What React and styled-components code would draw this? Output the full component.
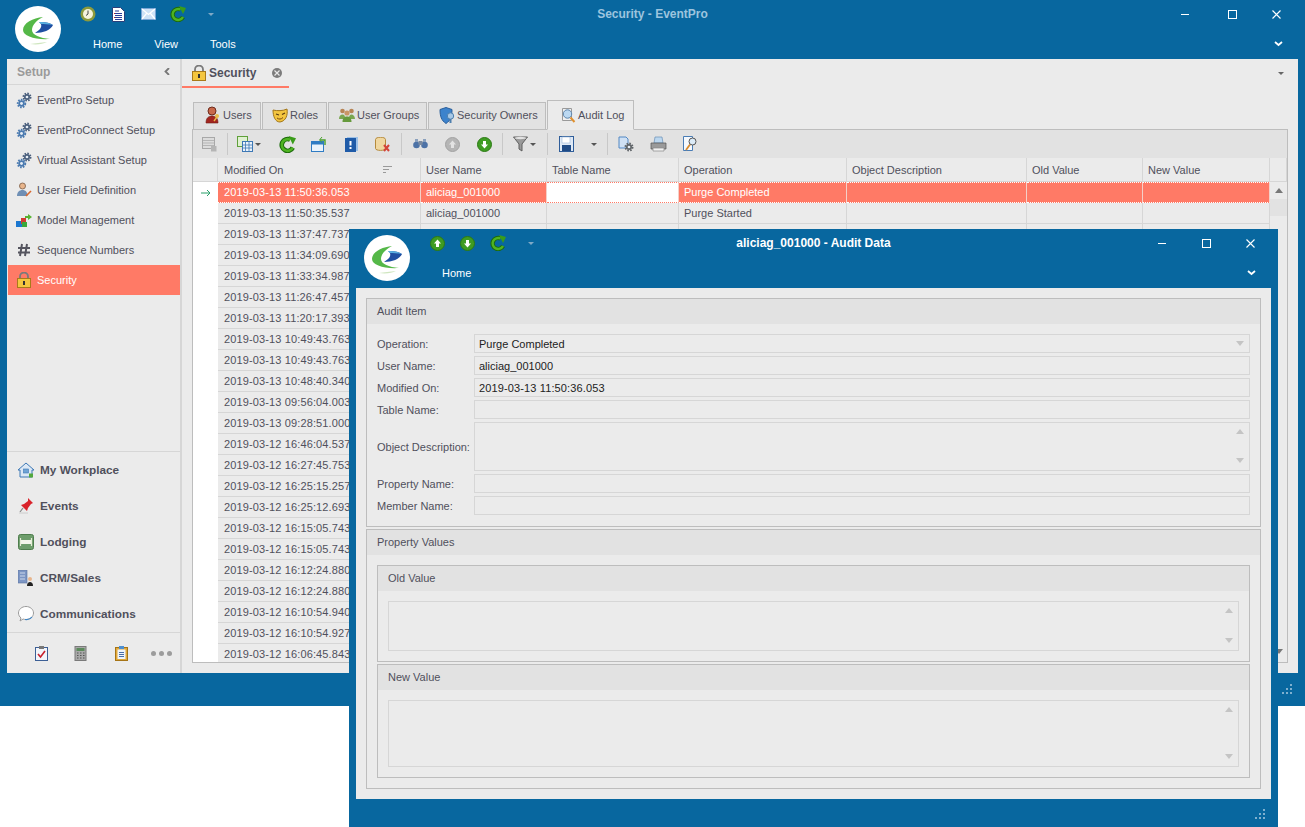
import React from "react";
import styled, { createGlobalStyle } from "styled-components";

const BLUE = "#08679f";
const PANEL = "#ebebeb";
const BAND = "#e2e2e2";
const LINE = "#bdbdbd";
const SOFT = "#d6d6d6";
const SALMON = "#ff7a66";
const TEXT = "#50505c";

const GlobalStyle = createGlobalStyle`
  html, body {
    margin: 0;
    background: #fff;
  }
  body {
    font-family: "Liberation Sans", Arial, sans-serif;
    font-size: 11px;
    color: ${TEXT};
  }
`;

const Desktop = styled.div`
  position: relative;
  width: 1305px;
  height: 827px;
  overflow: hidden;
`;

/* ---------- window chrome ---------- */

const MainWindow = styled.div`
  position: relative;
  height: 706px;
  background: ${BLUE};
  display: flex;
  flex-direction: column;
`;

const DialogWindow = styled.div`
  position: absolute;
  left: 349px;
  top: 229px;
  width: 929px;
  height: 598px;
  background: ${BLUE};
  display: flex;
  flex-direction: column;
`;

const LogoSpot = styled.div`
  position: absolute;
  left: 15px;
  top: 6px;
  width: 46px;
  height: 46px;
  border-radius: 50%;
  background: #fff;
`;

const TitleRow = styled.div`
  height: 30px;
  display: grid;
  grid-template-columns: 1fr auto 1fr;
  align-items: center;
  padding-bottom: 2px;
  box-sizing: border-box;
`;

const QuickBar = styled.div`
  display: flex;
  align-items: center;
  padding-left: ${(p) => p.$left}px;
  gap: ${(p) => p.$gap}px;
`;

const WindowTitle = styled.div`
  font-weight: bold;
  font-size: 12px;
  color: ${(p) => (p.$bright ? "#ffffff" : "#9cc4de")};
`;

const CaptionButtons = styled.div`
  display: flex;
  justify-content: flex-end;
  align-items: center;
  gap: 35px;
  padding-right: ${(p) => p.$right}px;
`;

const MinSlot = styled.div`
  display: flex;
  margin-right: ${(p) => p.$extra || 0}px;
`;

const MenuRow = styled.div`
  height: 29px;
  display: flex;
  align-items: center;
  justify-content: space-between;
  padding: 0 22px 1px ${(p) => p.$left}px;
  box-sizing: border-box;
`;

const MenuList = styled.div`
  display: flex;
  gap: 32px;
`;

const MenuItem = styled.span`
  color: #fff;
  font-size: 11px;
`;

const WorkArea = styled.div`
  margin: 0 7px;
  height: 614px;
  background: ${PANEL};
  display: flex;
`;

const StatusBar = styled.div`
  flex: 1;
  display: flex;
  align-items: center;
  justify-content: flex-end;
  padding-right: 12px;
  padding-top: ${(p) => p.$top || 0}px;
`;

/* ---------- sidebar ---------- */

const Sidebar = styled.aside`
  width: 175px;
  box-sizing: border-box;
  border-right: 2px solid ${SOFT};
  display: flex;
  flex-direction: column;
  flex-shrink: 0;
`;

const SidebarHead = styled.div`
  height: 26px;
  box-sizing: border-box;
  display: flex;
  align-items: center;
  justify-content: space-between;
  padding: 0 8px 0 10px;
  border-bottom: 1px solid ${SOFT};
  font-weight: bold;
  font-size: 12px;
  color: #9a9a9a;
`;

const NavList = styled.nav`
  flex: 1;
  padding-left: 1px;
`;

const IconSlot = styled.span`
  width: 16px;
  display: flex;
  align-items: center;
  justify-content: center;
  flex-shrink: 0;
`;

const NavItem = styled.div`
  height: 30px;
  display: flex;
  align-items: center;
  gap: 5px;
  padding-left: 8px;
  background: ${(p) => (p.$active ? SALMON : "transparent")};
  color: ${(p) => (p.$active ? "#fff" : TEXT)};
`;

const Modules = styled.div`
  box-sizing: border-box;
  height: 182px;
  border-top: 1px solid ${SOFT};
  border-bottom: 1px solid ${SOFT};
`;

const ModuleItem = styled.div`
  height: 36px;
  display: flex;
  align-items: center;
  gap: 6px;
  padding-left: 11px;
  font-weight: bold;
  font-size: 11.8px;
`;

const SideFooter = styled.div`
  height: 40px;
  display: grid;
  grid-template-columns: repeat(4, 40px);
  align-items: center;
  justify-items: center;
  padding-left: 14px;
`;

const MoreDots = styled.div`
  display: flex;
  gap: 3px;
`;

const Dot = styled.i`
  width: 5px;
  height: 5px;
  border-radius: 50%;
  background: #9c9c9c;
`;

/* ---------- document area ---------- */

const DocArea = styled.main`
  flex: 1;
  min-width: 0;
  display: flex;
  flex-direction: column;
`;

const DocTabs = styled.div`
  height: 30px;
  display: flex;
  align-items: flex-start;
  justify-content: space-between;
  padding-right: 14px;
`;

const DocTab = styled.div`
  width: 107px;
  height: 29px;
  box-sizing: border-box;
  border-bottom: 2px solid ${SALMON};
  display: flex;
  align-items: center;
  padding-left: 10px;
  gap: 3px;
  font-weight: bold;
  font-size: 12px;
`;

const CloseDot = styled.span`
  width: 10px;
  height: 10px;
  margin-left: 13px;
  border-radius: 50%;
  background: #7b7b7b;
  display: flex;
  align-items: center;
  justify-content: center;
`;

const SmallCaret = styled.span`
  width: 0;
  height: 0;
  display: block;
  border-left: 3px solid transparent;
  border-right: 3px solid transparent;
  border-top: 3px solid ${(p) => p.$color || "#555"};
  margin-left: ${(p) => p.$left || 0}px;
`;

const CaretHolder = styled.div`
  height: 28px;
  display: flex;
  align-items: center;
`;

const DocBody = styled.div`
  flex: 1;
  min-height: 0;
  display: flex;
  flex-direction: column;
  padding: 11px 10px 10px 10px;
`;

const AuditTabs = styled.div`
  display: flex;
  height: 30px;
  align-items: flex-end;
  gap: 1px;
  padding-left: 1px;
  margin-bottom: -1px;
  position: relative;
  z-index: 1;
`;

const AuditTab = styled.div`
  width: ${(p) => p.$w}px;
  height: ${(p) => (p.$active ? 30 : 28)}px;
  box-sizing: border-box;
  border: 1px solid ${LINE};
  border-bottom: 1px solid ${(p) => (p.$active ? PANEL : LINE)};
  background: ${(p) => (p.$active ? PANEL : BAND)};
  display: flex;
  align-items: center;
  gap: 2px;
  padding-left: ${(p) => p.$pad}px;
  padding-bottom: ${(p) => (p.$active ? 0 : 2)}px;
  white-space: nowrap;
`;

const AuditFrame = styled.div`
  flex: 1;
  min-height: 0;
  border: 1px solid ${LINE};
  display: flex;
  flex-direction: column;
`;

const Toolbar = styled.div`
  height: 28px;
  flex-shrink: 0;
  background: ${BAND};
  display: flex;
  align-items: center;
  padding-left: 4px;
`;

const ToolButton = styled.div`
  width: ${(p) => p.$w || 32}px;
  margin-left: ${(p) => p.$l || 0}px;
  display: flex;
  align-items: center;
  justify-content: center;
  gap: 2px;
`;

const ToolSep = styled.div`
  width: 1px;
  height: 22px;
  background: #c8c8c8;
  margin: 0 2px 0 ${(p) => p.$l ?? 2}px;
`;

const COLUMNS = "25px 203px 126px 132px 168px 180px 116px 127px";

const HeaderRow = styled.div`
  height: 24px;
  flex-shrink: 0;
  display: grid;
  grid-template-columns: ${COLUMNS} 17px;
  border-bottom: 1px solid ${SOFT};
  box-sizing: border-box;
`;

const HeaderCell = styled.div`
  min-width: 0;
  box-sizing: border-box;
  border-right: 1px solid ${SOFT};
  display: flex;
  align-items: center;
  justify-content: space-between;
  padding: 0 ${(p) => (p.$sorted ? 28 : 0)}px 0 5px;
  white-space: nowrap;
  &:nth-child(2) {
    padding-left: 6px;
  }
`;

const GridBody = styled.div`
  flex: 1;
  min-height: 0;
  display: flex;
  overflow: hidden;
  background: #fff;
`;

const Rows = styled.div`
  width: 1077px;
  overflow: hidden;
`;

const Row = styled.div`
  height: 21px;
  display: grid;
  grid-template-columns: ${COLUMNS};
`;

const RowMark = styled.div`
  background: #fff;
  display: flex;
  align-items: center;
  justify-content: center;
`;

const Cell = styled.div`
  box-sizing: border-box;
  border-right: 1px solid ${(p) => (p.$selected ? "#f4d0c8" : SOFT)};
  border-bottom: 1px solid ${SOFT};
  padding-left: 5px;
  line-height: 20px;
  white-space: nowrap;
  background: ${(p) => (p.$selected ? SALMON : PANEL)};
  color: ${(p) => (p.$selected ? "#fff" : TEXT)};
  ${(p) => p.$selected && "border-top: 1px dotted #fff; border-bottom: 1px dotted #fff; line-height: 18px;"}
  ${(p) => p.$focus && `background: #fff; border-top: 1px dotted ${SALMON}; border-bottom: 1px dotted ${SALMON};`}
  &:nth-child(2) {
    padding-left: 6px;
  }
`;

const TimeText = styled.span`
  letter-spacing: 0.13px;
`;

const ScrollTrack = styled.div`
  flex: 1;
  background: ${PANEL};
  display: flex;
  flex-direction: column;
  align-items: center;
  padding-bottom: 2px;
`;

const ScrollEnd = styled.div`
  height: 17px;
  display: flex;
  align-items: center;
  justify-content: center;
  flex-shrink: 0;
`;

const ScrollThumb = styled.div`
  width: 100%;
  height: 17px;
  background: ${BAND};
`;

const ScrollGap = styled.div`
  flex: 1;
`;

const Triangle = styled.span`
  width: 0;
  height: 0;
  border-left: 4px solid transparent;
  border-right: 4px solid transparent;
  ${(p) => (p.$down ? "border-top" : "border-bottom")}: 5px solid ${(p) => p.$color || "#777"};
`;

/* ---------- dialog ---------- */

const DialogBody = styled.div`
  margin: 0 7px;
  height: 511px;
  background: ${PANEL};
  box-sizing: border-box;
  padding: 10px;
  display: flex;
  flex-direction: column;
  gap: 2px;
  flex-shrink: 0;
`;

const GroupBox = styled.section`
  border: 1px solid ${LINE};
  display: flex;
  flex-direction: column;
  box-sizing: border-box;
  height: ${(p) => p.$h}px;
`;

const GroupHead = styled.div`
  height: 25px;
  box-sizing: border-box;
  flex-shrink: 0;
  background: ${BAND};
  display: flex;
  align-items: center;
  padding: 0 0 2px 10px;
`;

const AuditFields = styled.div`
  padding: 10px 10px 0 10px;
  display: flex;
  flex-direction: column;
  gap: 3px;
`;

const FieldRow = styled.div`
  display: grid;
  grid-template-columns: 97px 1fr;
  align-items: center;
`;

const FieldLabel = styled.label`
  white-space: nowrap;
`;

const FieldBox = styled.div`
  height: ${(p) => p.$h || 19}px;
  box-sizing: border-box;
  border: 1px solid ${SOFT};
  display: flex;
  align-items: center;
  justify-content: space-between;
  padding: 0 5px 0 4px;
  color: #222;
`;

const MemoButtons = styled.div`
  align-self: stretch;
  display: flex;
  flex-direction: column;
  justify-content: space-between;
  margin-left: auto;
  padding: 6px 0 7px;
`;

const GroupInner = styled.div`
  flex: 1;
  padding: 10px;
  display: flex;
  flex-direction: column;
  gap: 2px;
`;

const MemoPad = styled.div`
  flex: 1;
  padding: 10px;
  display: flex;
`;

const MemoBox = styled(FieldBox)`
  flex: 1;
  height: auto;
`;

/* ---------- drawings ---------- */

const Logo = () => (
  <svg width="46" height="46" viewBox="0 0 46 46">
    <path d="M28 11C18 12 8 17 8 24c0 6 12 10 27 9-10-1-18-4-18-9 0-5 5-10 11-13z" fill="#55b848" />
    <path d="M15 38c7 1 13 0 17-2-6 1-12 1-17 2z" fill="#cfe6bf" />
    <path d="M20 27c8 0 16-3 18-8-3-2.5-9-3.5-14-3 3 2 3 5 0 8z" fill="#1f4fa2" />
    <path d="M24 16c5-.5 10 .5 14 3-4-1-9-1-12-1z" fill="#5ab0e0" />
  </svg>
);

const Clock = () => (
  <svg width="16" height="16" viewBox="0 0 16 16">
    <circle cx="8" cy="8" r="7.5" fill="#8c9a3c" />
    <circle cx="8" cy="8" r="5" fill="#f5f3dc" />
    <path d="M8 4.5V8L6 9.5" stroke="#444" strokeWidth="1" fill="none" />
  </svg>
);

const Doc = () => (
  <svg width="13" height="15" viewBox="0 0 13 15">
    <path d="M.5.5h8l4 4v10H.5z" fill="#fff" stroke="#2a3f7a" />
    <path d="M3 4h4M3 6.5h7M3 8.5h7M3 10.5h7M3 12.5h7" stroke="#2a3f9a" strokeWidth="1" />
    <path d="M2 6.5h1M2 10.5h1" stroke="#c22" strokeWidth="1" />
  </svg>
);

const Mail = () => (
  <svg width="15" height="12" viewBox="0 0 15 12">
    <rect x=".5" y=".5" width="14" height="11" fill="#cfe3f7" stroke="#7aa5d4" />
    <path d="M1 1l6.5 5.5L14 1M1 11l4.5-5.5M14 11L9.5 5.5" stroke="#fff" strokeWidth="1.2" fill="none" />
  </svg>
);

const Refresh = ({ size = 16 }) => (
  <svg width={size} height={size} viewBox="0 0 16 16">
    <path d="M13 11A5.5 5.5 0 1 1 10.5 3.5" fill="none" stroke="#1c6a0c" strokeWidth="4.4" />
    <path d="M13 11A5.5 5.5 0 1 1 10.5 3.5" fill="none" stroke="#4fb422" strokeWidth="2.4" />
    <path d="M9 0l7 2-3 6z" fill="#3a9c1a" />
  </svg>
);

const Gear = ({ x, y, r, color }) => (
  <>
    <circle cx={x} cy={y} r={r + 0.6} fill="none" stroke={color} strokeWidth="1.8" strokeDasharray="1.6 1.2" />
    <circle cx={x} cy={y} r={r} fill={color} />
    <circle cx={x} cy={y} r={r * 0.45} fill="#e8eef5" />
  </>
);

const Gears = () => (
  <svg width="16" height="17" viewBox="0 0 16 17">
    <Gear x={11} y={5} r={3} color="#4a5f7d" />
    <Gear x={5.5} y={11.5} r={3.2} color="#4a7ab0" />
  </svg>
);

const UserEdit = () => (
  <svg width="16" height="16" viewBox="0 0 16 16">
    <circle cx="6.5" cy="4" r="3" fill="#e8b58c" stroke="#7a5a44" strokeWidth=".8" />
    <path d="M1 14c0-4 2.500-6 5.500-6s5 2 5 6z" fill="#6f8fb5" />
    <path d="M10 14l5-5" stroke="#d9682f" strokeWidth="1.6" />
  </svg>
);

const ModelIcon = () => (
  <svg width="16" height="13" viewBox="0 0 16 13">
    <rect x="0" y="7" width="6" height="6" fill="#1b77d0" />
    <rect x="5" y="4" width="5" height="6" fill="#d23c33" />
    <rect x="6" y="8" width="5" height="5" fill="#3aa83a" />
    <path d="M9 2h3V0l4 3-4 3V4H9z" fill="#58b332" />
  </svg>
);

const HashIcon = () => (
  <svg width="14" height="14" viewBox="0 0 14 14">
    <path d="M5 1L3 13M10 1L8 13M1 5h12M1 9.5h12" stroke="#55555f" strokeWidth="2" fill="none" />
  </svg>
);

const Lock = () => (
  <svg width="14" height="16" viewBox="0 0 14 16">
    <path d="M3 7V4.5a4 4 0 0 1 8 0V7" fill="none" stroke="#7a7a7a" strokeWidth="1.8" />
    <rect x=".5" y="6.5" width="13" height="9" fill="#f4c63f" stroke="#a97a1a" />
    <rect x="6" y="9" width="2" height="4" fill="#333" />
  </svg>
);

const HomeIcon = () => (
  <svg width="16" height="16" viewBox="0 0 16 16">
    <path d="M8 1L0 8h2v7h12V8h2z" fill="#dce8f5" stroke="#3d78b5" />
    <rect x="5.5" y="7" width="5" height="4" fill="#6fa3d5" stroke="#3d78b5" strokeWidth=".6" />
    <rect x="11" y="11.5" width="4" height="4" fill="#53a83c" />
  </svg>
);

const PinIcon = () => (
  <svg width="16" height="16" viewBox="0 0 16 16">
    <path d="M10 0l5 5-2 1-3 4-1 3-6-6 3-1 4-3z" fill="#d9232b" />
    <path d="M5 10L2 14" stroke="#888" strokeWidth="1.2" />
    <path d="M1 15h9" stroke="#ccc" strokeWidth="1" />
  </svg>
);

const BedIcon = () => (
  <svg width="16" height="16" viewBox="0 0 16 16">
    <rect x=".5" y=".5" width="15" height="15" rx="2" fill="#6d9d6b" stroke="#4e7d4d" />
    <rect x="3" y="6" width="10" height="4" fill="#f2f5ea" />
    <path d="M2.5 4v8M13.5 4v8" stroke="#e6ecd8" strokeWidth="1.2" />
  </svg>
);

const CrmIcon = () => (
  <svg width="16" height="16" viewBox="0 0 16 16">
    <rect x="0" y="0" width="9" height="13" fill="#7d96c4" stroke="#596f9c" strokeWidth=".6" />
    <path d="M2 3h5M2 6h5M2 9h5" stroke="#cdd8ea" strokeWidth="1" />
    <circle cx="12" cy="9" r="2" fill="#e8b58c" />
    <path d="M9 16c0-3 1.5-4 3-4s3 1 3 4z" fill="#222" />
  </svg>
);

const Bubble = () => (
  <svg width="16" height="16" viewBox="0 0 16 16">
    <path d="M8 .5c4.2 0 7.5 2.9 7.5 6.5s-3.3 6.5-7.5 6.5c-1 0-2-.2-2.9-.5L2 15l1-3C1.5 10.8.5 9 .5 7 .5 3.400 3.800.5 8 .5z" fill="#fff" stroke="#9a9a9a" />
    <path d="M14 11c-1.5 2-4 3-7 2.5" stroke="#3d85c6" strokeWidth="1.2" fill="none" />
  </svg>
);

const ClipCheck = () => (
  <svg width="13" height="15" viewBox="0 0 13 15">
    <rect x=".5" y="1.5" width="12" height="13" fill="#f3f5fa" stroke="#3c5f95" />
    <rect x="4" y="0" width="5" height="3" fill="#777" />
    <path d="M3 8l2.5 3L10 5" stroke="#c8202c" strokeWidth="1.6" fill="none" />
  </svg>
);

const Calc = () => (
  <svg width="14" height="15" viewBox="0 0 14 15">
    <rect x="1" y=".5" width="11" height="14" fill="#a9a9a9" stroke="#7a7a7a" />
    <rect x="2.5" y="2" width="8" height="3" fill="#5c8a5c" />
    <path d="M3 7h1.5M6 7h1.5M9 7h1.5M3 9.5h1.5M6 9.5h1.5M9 9.5h1.5M3 12h1.5M6 12h1.5M9 12h1.5" stroke="#555" strokeWidth="1.2" />
  </svg>
);

const ClipNote = () => (
  <svg width="13" height="15" viewBox="0 0 13 15">
    <rect x=".5" y="1.5" width="12" height="13" fill="#e2a93a" stroke="#a67416" />
    <rect x="2.5" y="3.5" width="8" height="9.5" fill="#eef4fb" />
    <rect x="4" y="0" width="5" height="3" fill="#4d8fd1" />
    <path d="M4 6.5h5M4 8.5h5M4 10.5h5" stroke="#4a6ea9" strokeWidth="1" />
  </svg>
);

const Chevron = ({ color = "#fff", down }) => (
  <svg width="9" height="7" viewBox="0 0 9 7">
    <path d={down ? "M1 1l3.5 3L8 1" : "M6 0L2.5 3.5 6 7"} stroke={color} strokeWidth="1.8" fill="none" />
  </svg>
);

const MinIcon = () => (
  <svg width="9" height="9" viewBox="0 0 9 9">
    <path d="M0 4.5h8" stroke="#fff" strokeWidth="1" />
  </svg>
);

const MaxIcon = () => (
  <svg width="9" height="9" viewBox="0 0 9 9">
    <rect x=".5" y=".5" width="8" height="8" fill="none" stroke="#fff" />
  </svg>
);

const CloseIcon = () => (
  <svg width="9" height="9" viewBox="0 0 9 9">
    <path d="M.5.5l8 8M8.5.5l-8 8" stroke="#fff" strokeWidth="1.1" />
  </svg>
);

const Grip = () => (
  <svg width="11" height="11" viewBox="0 0 11 11" fill="#7fb0cf">
    <rect x="8" y="0" width="2" height="2" />
    <rect x="4" y="4" width="2" height="2" />
    <rect x="8" y="4" width="2" height="2" />
    <rect x="0" y="8" width="2" height="2" />
    <rect x="4" y="8" width="2" height="2" />
    <rect x="8" y="8" width="2" height="2" />
  </svg>
);

const GreenArrow = ({ up, grey }) => (
  <svg width="15" height="15" viewBox="0 0 15 15">
    <circle cx="7.5" cy="7.5" r="7" fill={grey ? "#b5b5b5" : "#3f9c23"} stroke={grey ? "#a2a2a2" : "#2c7a14"} />
    <path
      d={up ? "M7.5 3.5L11 7.5H9V11H6V7.5H4z" : "M7.5 11.5L11 7.5H9V4H6V7.5H4z"}
      fill={grey ? "#e2e2e2" : "#fff"}
    />
  </svg>
);

const SortMark = () => (
  <svg width="9" height="8" viewBox="0 0 9 8">
    <path d="M0 .5h9M0 3.5h6M0 6.5h3" stroke="#9a9a9a" strokeWidth="1" />
  </svg>
);

const RowArrow = () => (
  <svg width="10" height="8" viewBox="0 0 10 8">
    <path d="M0 4h9M6 1l3 3-3 3" stroke="#2aa06a" strokeWidth="1" fill="none" />
  </svg>
);

const UsersIcon = () => (
  <svg width="16" height="18" viewBox="0 0 16 18">
    <circle cx="7" cy="5" r="4" fill="#c8694a" stroke="#6e2b1d" />
    <path d="M1 17c0-5 2.5-7 6-7s6 2 6 7z" fill="#a3251f" stroke="#6e1b14" strokeWidth=".6" />
    <circle cx="12" cy="10" r="2" fill="#e9bb49" />
    <path d="M12 11l-3 4" stroke="#e9bb49" strokeWidth="1.4" />
  </svg>
);

const MaskIcon = () => (
  <svg width="16" height="15" viewBox="0 0 16 15">
    <path d="M1 2c4 1 10 1 14-1 1 6-1 12-7 13C3 14 1 8 1 2z" fill="#f3c540" stroke="#a2761a" />
    <path d="M4 6l3 1M10 6.5l3-1.5" stroke="#5a3a10" strokeWidth="1.2" />
    <path d="M5 10c2 1.5 4 1.5 6-.5" stroke="#7a4a10" fill="none" />
  </svg>
);

const GroupIcon = () => (
  <svg width="16" height="14" viewBox="0 0 16 14">
    <circle cx="3.5" cy="3" r="2.3" fill="#b78455" />
    <circle cx="12.5" cy="3" r="2.3" fill="#b78455" />
    <circle cx="8" cy="5" r="2.6" fill="#c99566" />
    <path d="M0 11c0-3 1.5-4.5 3.500-4.500S6 8 6 10v1zM10 10c0-2 1-3.500 2.500-3.500S16 8 16 11h-6z" fill="#7aa650" />
    <path d="M3.5 14c0-4 2-5.500 4.500-5.500s4.500 1.500 4.500 5.500z" fill="#669a3c" />
  </svg>
);

const ShieldIcon = () => (
  <svg width="16" height="17" viewBox="0 0 16 17">
    <path d="M7 .5l6 2c0 7-1.500 11-6 14-4.500-3-6-7-6-14z" fill="#3d83cc" stroke="#2a5e9a" />
    <circle cx="11.5" cy="9" r="3.2" fill="#a7c8e6" stroke="#4e7fae" />
    <path d="M10.5 12h2v4h-2z" fill="#4e7fae" />
  </svg>
);

const AuditLogIcon = () => (
  <svg width="15" height="16" viewBox="0 0 15 16">
    <path d="M1.5 1.5h9v12h-9z" fill="#f0f0f0" stroke="#9a9a9a" />
    <circle cx="6.5" cy="7" r="4.2" fill="#bcd9f2" stroke="#5f86ad" />
    <path d="M9.5 10.5L13.500 15" stroke="#e0902e" strokeWidth="2" />
  </svg>
);

const FindDoc = () => (
  <svg width="15" height="16" viewBox="0 0 15 16">
    <path d="M.5.5h9v14h-9z" fill="#f6f9fd" stroke="#4a7db5" />
    <circle cx="9.5" cy="5.5" r="3.5" fill="#dcebf7" stroke="#555" />
    <path d="M7 8.5L3 14" stroke="#d98a2b" strokeWidth="1.8" />
  </svg>
);

const RecordsIcon = () => (
  <svg width="15" height="15" viewBox="0 0 15 15">
    <rect x=".5" y=".5" width="12" height="11" fill="#dcdcdc" stroke="#a8a8a8" />
    <path d="M1 3.5h11M1 6h11M1 8.5h11" stroke="#b5b5b5" />
    <rect x="9" y="9" width="5.5" height="5.5" fill="#b5b5b5" />
  </svg>
);

const ColumnsIcon = () => (
  <svg width="16" height="16" viewBox="0 0 16 16">
    <rect x=".5" y=".5" width="10" height="10" fill="#dff0d0" stroke="#5fa03a" />
    <rect x="5.5" y="5.5" width="10" height="10" fill="#eaf2fb" stroke="#3d78b5" />
    <path d="M8.5 6v9M12 6v9M6 9h9M6 12h9" stroke="#3d78b5" strokeWidth=".8" />
  </svg>
);

const RestoreIcon = () => (
  <svg width="16" height="15" viewBox="0 0 16 15">
    <rect x=".5" y="4.5" width="12" height="10" fill="#eaf3fb" stroke="#2f7cc4" />
    <rect x="1" y="5" width="11" height="2.5" fill="#2f7cc4" />
    <path d="M9 3h5v5" stroke="#4aa02c" strokeWidth="1.4" fill="none" />
    <path d="M11 0L8.5 3 11 5.5" stroke="#4aa02c" fill="none" />
  </svg>
);

const BookIcon = () => (
  <svg width="13" height="15" viewBox="0 0 13 15">
    <rect x="2" y="0" width="11" height="14" fill="#9cc0e6" />
    <rect x="0" y="1" width="11" height="14" fill="#1f5ba8" />
    <rect x="4.5" y="4" width="2" height="4.5" fill="#fff" />
    <rect x="4.5" y="10" width="2" height="2" fill="#fff" />
  </svg>
);

const DbDelete = () => (
  <svg width="15" height="15" viewBox="0 0 15 15">
    <path d="M.5 2.5c0-3 10-3 10 0v9c0 2.500-10 2.500-10 0z" fill="#f0d7a0" stroke="#b58a3c" />
    <path d="M9 8l5 6M14 8l-5 6" stroke="#d3443a" strokeWidth="2" />
  </svg>
);

const Binoculars = () => (
  <svg width="15" height="10" viewBox="0 0 15 10">
    <circle cx="3.5" cy="6" r="3.3" fill="#4d72a6" />
    <circle cx="11.5" cy="6" r="3.3" fill="#4d72a6" />
    <rect x="5.5" y="2" width="4" height="4" fill="#7a8aa0" />
    <rect x="2" y="0" width="3" height="3" fill="#8aa0bd" />
    <rect x="10" y="0" width="3" height="3" fill="#8aa0bd" />
  </svg>
);

const Funnel = () => (
  <svg width="15" height="16" viewBox="0 0 15 16">
    <path d="M.5 1h14L9 8v7l-3-2V8z" fill="#9a9a9a" stroke="#5e5e5e" />
    <ellipse cx="7.5" cy="2" rx="6" ry="1.2" fill="#e2e2e2" />
  </svg>
);

const Floppy = () => (
  <svg width="15" height="16" viewBox="0 0 15 16">
    <rect x=".5" y=".5" width="14" height="15" fill="#dfe9f5" stroke="#2f5d99" />
    <rect x="3" y="9" width="9" height="6" fill="#1f4a85" />
    <rect x="3" y="1" width="8" height="6" fill="#fff" stroke="#9ab5d6" strokeWidth=".6" />
  </svg>
);

const DocGear = () => (
  <svg width="16" height="16" viewBox="0 0 16 16">
    <path d="M1 1h7l2 2v9H1z" fill="#cfe0f3" stroke="#5288c4" />
    <Gear x={11} y={11} r={3} color="#5f6468" />
  </svg>
);

const Printer = () => (
  <svg width="17" height="16" viewBox="0 0 17 16">
    <path d="M5 1h7l1 6H4z" fill="#bcd7ef" stroke="#6a8fb5" strokeWidth=".7" />
    <path d="M1 7h15v6H1z" fill="#9a9a9a" stroke="#555" strokeWidth=".7" />
    <path d="M3 12h11v3H3z" fill="#f2f2f2" stroke="#888" strokeWidth=".7" />
  </svg>
);

const CloseGlyph = () => (
  <svg width="6" height="6" viewBox="0 0 6 6">
    <path d="M.5.5l5 5M5.5.5l-5 5" stroke="#e8e8e8" strokeWidth="1.2" />
  </svg>
);

/* ---------- data ---------- */

const setupItems = [
  { label: "EventPro Setup", icon: <Gears /> },
  { label: "EventProConnect Setup", icon: <Gears /> },
  { label: "Virtual Assistant Setup", icon: <Gears /> },
  { label: "User Field Definition", icon: <UserEdit /> },
  { label: "Model Management", icon: <ModelIcon /> },
  { label: "Sequence Numbers", icon: <HashIcon /> },
  { label: "Security", icon: <Lock />, active: true },
];

const modules = [
  { label: "My Workplace", icon: <HomeIcon /> },
  { label: "Events", icon: <PinIcon /> },
  { label: "Lodging", icon: <BedIcon /> },
  { label: "CRM/Sales", icon: <CrmIcon /> },
  { label: "Communications", icon: <Bubble /> },
];

const auditTabs = [
  { label: "Users", w: 68, pad: 11, icon: <UsersIcon /> },
  { label: "Roles", w: 65, pad: 9, icon: <MaskIcon /> },
  { label: "User Groups", w: 99, pad: 10, icon: <GroupIcon /> },
  { label: "Security Owners", w: 118, pad: 10, icon: <ShieldIcon /> },
  { label: "Audit Log", w: 87, pad: 13, icon: <AuditLogIcon />, active: true },
];

const columns = ["Modified On", "User Name", "Table Name", "Operation", "Object Description", "Old Value", "New Value"];

const rows = [
  ["2019-03-13 11:50:36.053", "aliciag_001000", "", "Purge Completed"],
  ["2019-03-13 11:50:35.537", "aliciag_001000", "", "Purge Started"],
  ["2019-03-13 11:37:47.737"],
  ["2019-03-13 11:34:09.690"],
  ["2019-03-13 11:33:34.987"],
  ["2019-03-13 11:26:47.457"],
  ["2019-03-13 11:20:17.393"],
  ["2019-03-13 10:49:43.763"],
  ["2019-03-13 10:49:43.763"],
  ["2019-03-13 10:48:40.340"],
  ["2019-03-13 09:56:04.003"],
  ["2019-03-13 09:28:51.000"],
  ["2019-03-12 16:46:04.537"],
  ["2019-03-12 16:27:45.753"],
  ["2019-03-12 16:25:15.257"],
  ["2019-03-12 16:25:12.693"],
  ["2019-03-12 16:15:05.743"],
  ["2019-03-12 16:15:05.743"],
  ["2019-03-12 16:12:24.880"],
  ["2019-03-12 16:12:24.880"],
  ["2019-03-12 16:10:54.940"],
  ["2019-03-12 16:10:54.927"],
  ["2019-03-12 16:06:45.843"],
];

const COL_INDEXES = [0, 1, 2, 3, 4, 5, 6];

/* ---------- parts ---------- */

const AuditGrid = () => (
  <>
    <HeaderRow>
      <HeaderCell />
      {columns.map((c, i) => (
        <HeaderCell key={c} $sorted={i === 0}>
          {c}
          {i === 0 && <SortMark />}
        </HeaderCell>
      ))}
      <HeaderCell />
    </HeaderRow>
    <GridBody>
      <Rows>
        {rows.map((r, i) => (
          <Row key={i}>
            <RowMark>{i === 0 && <RowArrow />}</RowMark>
            {COL_INDEXES.map((c) => (
              <Cell key={c} $selected={i === 0} $focus={i === 0 && c === 2}>
                {c === 0 ? <TimeText>{r[0]}</TimeText> : r[c] || ""}
              </Cell>
            ))}
          </Row>
        ))}
      </Rows>
      <ScrollTrack>
        <ScrollEnd>
          <Triangle />
        </ScrollEnd>
        <ScrollThumb />
        <ScrollGap />
        <ScrollEnd>
          <Triangle $down />
        </ScrollEnd>
      </ScrollTrack>
    </GridBody>
  </>
);

const Memo = () => (
  <MemoButtons>
    <Triangle $color="#c4c4c4" />
    <Triangle $down $color="#c4c4c4" />
  </MemoButtons>
);

const AuditToolbar = () => (
  <Toolbar>
    <ToolButton $w={24}>
      <RecordsIcon />
    </ToolButton>
    <ToolSep $l={6} />
    <ToolButton $w={38}>
      <ColumnsIcon />
      <SmallCaret />
    </ToolButton>
    <ToolButton $l={3}>
      <Refresh size={17} />
    </ToolButton>
    <ToolButton>
      <RestoreIcon />
    </ToolButton>
    <ToolButton>
      <BookIcon />
    </ToolButton>
    <ToolButton $w={30}>
      <DbDelete />
    </ToolButton>
    <ToolSep $l={4} />
    <ToolButton>
      <Binoculars />
    </ToolButton>
    <ToolButton>
      <GreenArrow up grey />
    </ToolButton>
    <ToolButton>
      <GreenArrow />
    </ToolButton>
    <ToolSep />
    <ToolButton $w={38}>
      <Funnel />
      <SmallCaret />
    </ToolButton>
    <ToolSep $l={4} />
    <ToolButton $w={56}>
      <Floppy />
      <SmallCaret $left={15} />
    </ToolButton>
    <ToolSep $l={1} />
    <ToolButton>
      <DocGear />
    </ToolButton>
    <ToolButton>
      <Printer />
    </ToolButton>
    <ToolButton>
      <FindDoc />
    </ToolButton>
  </Toolbar>
);

const AuditDialog = () => (
  <DialogWindow>
    <TitleRow>
      <QuickBar $left={81} $gap={15}>
        <GreenArrow up />
        <GreenArrow />
        <Refresh />
        <SmallCaret $color="#7fa9c6" $left={7} />
      </QuickBar>
      <WindowTitle $bright>aliciag_001000 - Audit Data</WindowTitle>
      <CaptionButtons $right={23}>
        <MinSlot>
          <MinIcon />
        </MinSlot>
        <MaxIcon />
        <CloseIcon />
      </CaptionButtons>
    </TitleRow>
    <MenuRow $left={93}>
      <MenuList>
        <MenuItem>Home</MenuItem>
      </MenuList>
      <Chevron down />
    </MenuRow>
    <LogoSpot>
      <Logo />
    </LogoSpot>
    <DialogBody>
      <GroupBox $h={229}>
        <GroupHead>Audit Item</GroupHead>
        <AuditFields>
          <FieldRow>
            <FieldLabel>Operation:</FieldLabel>
            <FieldBox>
              Purge Completed
              <Triangle $down $color="#c4c4c4" />
            </FieldBox>
          </FieldRow>
          <FieldRow>
            <FieldLabel>User Name:</FieldLabel>
            <FieldBox>aliciag_001000</FieldBox>
          </FieldRow>
          <FieldRow>
            <FieldLabel>Modified On:</FieldLabel>
            <FieldBox>
              <TimeText>2019-03-13 11:50:36.053</TimeText>
            </FieldBox>
          </FieldRow>
          <FieldRow>
            <FieldLabel>Table Name:</FieldLabel>
            <FieldBox />
          </FieldRow>
          <FieldRow>
            <FieldLabel>Object Description:</FieldLabel>
            <FieldBox $h={49}>
              <Memo />
            </FieldBox>
          </FieldRow>
          <FieldRow>
            <FieldLabel>Property Name:</FieldLabel>
            <FieldBox />
          </FieldRow>
          <FieldRow>
            <FieldLabel>Member Name:</FieldLabel>
            <FieldBox />
          </FieldRow>
        </AuditFields>
      </GroupBox>
      <GroupBox $h={260}>
        <GroupHead>Property Values</GroupHead>
        <GroupInner>
          <GroupBox $h={97}>
            <GroupHead>Old Value</GroupHead>
            <MemoPad>
              <MemoBox>
                <Memo />
              </MemoBox>
            </MemoPad>
          </GroupBox>
          <GroupBox $h={114}>
            <GroupHead>New Value</GroupHead>
            <MemoPad>
              <MemoBox>
                <Memo />
              </MemoBox>
            </MemoPad>
          </GroupBox>
        </GroupInner>
      </GroupBox>
    </DialogBody>
    <StatusBar $top={3}>
      <Grip />
    </StatusBar>
  </DialogWindow>
);

export default function App() {
  return (
    <Desktop>
      <GlobalStyle />
      <MainWindow>
        <TitleRow>
          <QuickBar $left={80} $gap={14}>
            <IconSlot>
              <Clock />
            </IconSlot>
            <IconSlot>
              <Doc />
            </IconSlot>
            <IconSlot>
              <Mail />
            </IconSlot>
            <IconSlot>
              <Refresh />
            </IconSlot>
            <SmallCaret $color="#7fa9c6" $left={8} />
          </QuickBar>
          <WindowTitle>Security - EventPro</WindowTitle>
          <CaptionButtons $right={24}>
            <MinSlot $extra={3}>
              <MinIcon />
            </MinSlot>
            <MaxIcon />
            <CloseIcon />
          </CaptionButtons>
        </TitleRow>
        <MenuRow $left={93}>
          <MenuList>
            <MenuItem>Home</MenuItem>
            <MenuItem>View</MenuItem>
            <MenuItem>Tools</MenuItem>
          </MenuList>
          <Chevron down />
        </MenuRow>
        <LogoSpot>
          <Logo />
        </LogoSpot>
        <WorkArea>
          <Sidebar>
            <SidebarHead>
              Setup
              <Chevron color="#777" />
            </SidebarHead>
            <NavList>
              {setupItems.map((item) => (
                <NavItem key={item.label} $active={item.active}>
                  <IconSlot>{item.icon}</IconSlot>
                  {item.label}
                </NavItem>
              ))}
            </NavList>
            <Modules>
              {modules.map((m) => (
                <ModuleItem key={m.label}>
                  <IconSlot>{m.icon}</IconSlot>
                  {m.label}
                </ModuleItem>
              ))}
            </Modules>
            <SideFooter>
              <ClipCheck />
              <Calc />
              <ClipNote />
              <MoreDots>
                <Dot />
                <Dot />
                <Dot />
              </MoreDots>
            </SideFooter>
          </Sidebar>
          <DocArea>
            <DocTabs>
              <DocTab>
                <Lock />
                Security
                <CloseDot>
                  <CloseGlyph />
                </CloseDot>
              </DocTab>
              <CaretHolder>
                <SmallCaret $color="#666" />
              </CaretHolder>
            </DocTabs>
            <DocBody>
              <AuditTabs>
                {auditTabs.map((t) => (
                  <AuditTab key={t.label} $w={t.w} $pad={t.pad} $active={t.active}>
                    {t.icon}
                    {t.label}
                  </AuditTab>
                ))}
              </AuditTabs>
              <AuditFrame>
                <AuditToolbar />
                <AuditGrid />
              </AuditFrame>
            </DocBody>
          </DocArea>
        </WorkArea>
        <StatusBar>
          <Grip />
        </StatusBar>
      </MainWindow>
      <AuditDialog />
    </Desktop>
  );
}
